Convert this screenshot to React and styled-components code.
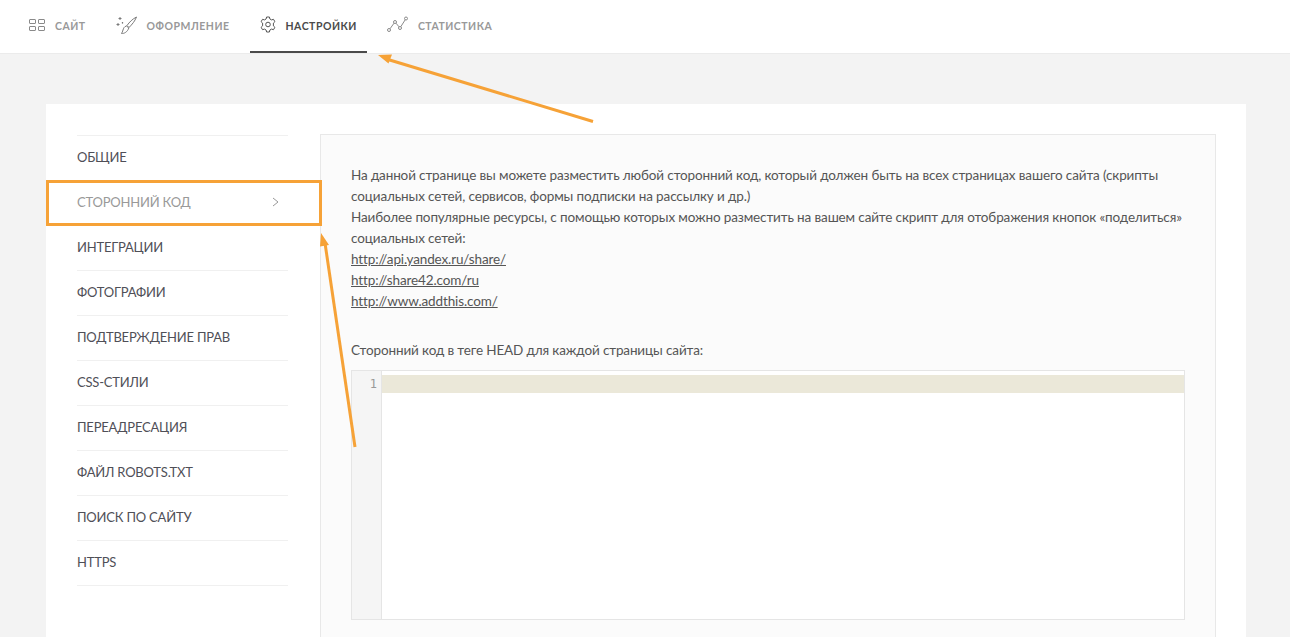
import React from 'react';
import styled, { createGlobalStyle } from 'styled-components';

const Global = createGlobalStyle`
  html, body { margin: 0; padding: 0; background: #f3f3f3; overflow: hidden; }
  body { font-family: Lato, "Open Sans", sans-serif; color: #4a4a4a; }
`;

const Page = styled.div`
  position: relative;
  width: 1290px;
  height: 637px;
  overflow: hidden;
`;

const TopBar = styled.nav`
  display: flex;
  gap: 10px;
  height: 53px;
  padding-left: 19px;
  background: #fff;
  border-bottom: 1px solid #ebebeb;
`;

const Tab = styled.a`
  display: flex;
  align-items: center;
  gap: 10px;
  height: 51px;
  padding: 0 10px;
  border-bottom: 2px solid ${p => (p.$active ? '#4a4a4a' : 'transparent')};
  color: ${p => (p.$active ? '#4a4a4a' : '#999')};
  font-size: 10.5px;
  font-weight: 700;
  letter-spacing: 0.5px;
  white-space: nowrap;
  svg { display: block; flex: none; position: relative; top: -1px; }
`;

const Card = styled.main`
  display: flex;
  gap: 32px;
  margin: 50px 0 0 46px;
  width: 1170px;
  height: 540px;
  padding: 30px 30px 0 0;
  background: #fff;
`;

const Side = styled.ul`
  width: 211px;
  margin: 1px 0 0 31px;
  padding: 0;
  list-style: none;
  flex: none;
  border-top: 1px solid #f0f0f0;
`;

const SideItem = styled.li`
  display: flex;
  align-items: center;
  justify-content: space-between;
  box-sizing: border-box;
  height: 45px;
  padding: 0 9px 2px 0;
  border-bottom: 1px solid ${p => (p.$active ? 'transparent' : '#f0f0f0')};
  color: ${p => (p.$active ? '#999' : '#4f4f57')};
  font-size: 13px;
  letter-spacing: -0.2px;
`;

const Panel = styled.section`
  width: 896px;
  flex: none;
  box-sizing: border-box;
  padding: 30px 30px 0 30px;
  background: #fbfbfb;
  border: 1px solid #e8e8e8;
  border-bottom: 0;
  font-size: 13.5px;
  letter-spacing: -0.13px;
  line-height: 21px;
  color: #555;
`;

const Intro = styled.p`
  margin: 0;
`;

const Link = styled.a`
  display: block;
  color: #555;
  text-decoration: underline;
`;

const Label = styled.p`
  margin: 28px 0 9px;
`;

const Editor = styled.div`
  display: flex;
  width: 834px;
  height: 250px;
  box-sizing: border-box;
  background: #fff;
  border: 1px solid #e5e5e5;
`;

const Gutter = styled.div`
  width: 30px;
  flex: none;
  box-sizing: border-box;
  padding: 4px 4px 0 0;
  background: #f5f5f5;
  border-right: 1px solid #e5e5e5;
  text-align: right;
  font: 12px/18px "DejaVu Sans Mono", monospace;
  letter-spacing: 0;
  color: #999;
`;

const Code = styled.div`
  flex: 1;
  padding-top: 4px;
`;

const ActiveLine = styled.div`
  height: 18px;
  background: #ebe8d9;
`;

const Marks = styled.svg`
  position: absolute;
  inset: 0;
  pointer-events: none;
`;

const GridIcon = () => (
  <svg width="16" height="14" viewBox="0 0 16 14" fill="none" stroke="#8a8a8a" strokeWidth="1">
    <rect x="0.5" y="1.5" width="6" height="4" rx="0.5" />
    <rect x="9.5" y="1.5" width="6" height="4" rx="0.5" />
    <rect x="0.5" y="8.5" width="6" height="4" rx="0.5" />
    <rect x="9.5" y="8.5" width="6" height="4" rx="0.5" />
  </svg>
);

const BrushIcon = () => (
  <svg width="21" height="18" viewBox="0 0 21 18" fill="none" stroke="#7a7a7a" strokeWidth="1">
    <path d="M20.5 1 C16.5 3 13.5 6 11 9.5 L13 11.5 C16 8.5 19 5 20.5 1Z" />
    <path d="M10.5 10 C8 10.5 7.5 12.5 7 14 C6.8 15.5 6 16.5 5.5 17.5 C8 17.8 11.5 16 12.8 12Z" />
    <path d="M4 1 V4 M2.5 2.5 H5.5 M2 7 V10 M0.5 8.5 H3.5 M6.5 6 V7.5 M5.8 6.8 H7.2" />
  </svg>
);

const GearIcon = () => (
  <svg width="16" height="17" viewBox="0 0 16 17" fill="none" stroke="#555" strokeWidth="1">
    <circle cx="8" cy="8.5" r="2.3" />
    <path d="M6.6 1 H9.4 L9.9 3 L11.5 3.9 L13.5 3.3 L14.9 5.7 L13.4 7.1 V9.9 L14.9 11.3 L13.5 13.7 L11.5 13.1 L9.9 14 L9.4 16 H6.6 L6.1 14 L4.5 13.1 L2.5 13.7 L1.1 11.3 L2.6 9.9 V7.1 L1.1 5.7 L2.5 3.3 L4.5 3.9 L6.1 3Z" strokeLinejoin="round" />
  </svg>
);

const StatsIcon = () => (
  <svg width="21" height="17" viewBox="0 0 21 17" fill="none" stroke="#8a8a8a" strokeWidth="1">
    <circle cx="2" cy="14" r="1.5" />
    <circle cx="8" cy="6" r="1.5" />
    <circle cx="13" cy="12" r="1.5" />
    <circle cx="19" cy="2.5" r="1.5" />
    <path d="M3 12.8 L7 7.2 M9 7.2 L12 10.8 M13.8 10.7 L18.2 3.8" />
  </svg>
);

const menu = [
  'ОБЩИЕ',
  'СТОРОННИЙ КОД',
  'ИНТЕГРАЦИИ',
  'ФОТОГРАФИИ',
  'ПОДТВЕРЖДЕНИЕ ПРАВ',
  'CSS-СТИЛИ',
  'ПЕРЕАДРЕСАЦИЯ',
  'ФАЙЛ ROBOTS.TXT',
  'ПОИСК ПО САЙТУ',
  'HTTPS',
];

export default function App() {
  return (
    <Page>
      <Global />
      <TopBar>
        <Tab><GridIcon />САЙТ</Tab>
        <Tab><BrushIcon />ОФОРМЛЕНИЕ</Tab>
        <Tab $active><GearIcon />НАСТРОЙКИ</Tab>
        <Tab><StatsIcon />СТАТИСТИКА</Tab>
      </TopBar>
      <Card>
        <Side>
          {menu.map((item, i) => (
            <SideItem key={item} $active={i === 1}>
              {item}
              {i === 1 && (
                <svg width="7" height="10" viewBox="0 0 7 10" fill="none" stroke="#999" strokeWidth="1">
                  <path d="M1 1 L6 5 L1 9" />
                </svg>
              )}
            </SideItem>
          ))}
        </Side>
        <Panel>
          <Intro>
            На данной странице вы можете разместить любой сторонний код, который должен быть на всех страницах вашего сайта (скрипты социальных сетей, сервисов, формы подписки на рассылку и др.)
            <br />
            Наиболее популярные ресурсы, с помощью которых можно разместить на вашем сайте скрипт для отображения кнопок «поделиться» социальных сетей:
          </Intro>
          <Link>http://api.yandex.ru/share/</Link>
          <Link>http://share42.com/ru</Link>
          <Link>http://www.addthis.com/</Link>
          <Label>Сторонний код в теге HEAD для каждой страницы сайта:</Label>
          <Editor>
            <Gutter>1</Gutter>
            <Code><ActiveLine /></Code>
          </Editor>
        </Panel>
      </Card>
      <Marks width="1290" height="637" viewBox="0 0 1290 637">
        <rect x="47.5" y="181.5" width="273" height="43" fill="none" stroke="#f6a237" strokeWidth="3" />
        <path d="M593 121.5 L388 59.5" stroke="#f6a237" strokeWidth="3" fill="none" />
        <path d="M378 55 L392 54.5 L388.5 63.5Z" fill="#f6a237" />
        <path d="M355 447 L325 243" stroke="#f6a237" strokeWidth="3" fill="none" />
        <path d="M321 233 L329 245 L320 246.5Z" fill="#f6a237" />
      </Marks>
    </Page>
  );
}
